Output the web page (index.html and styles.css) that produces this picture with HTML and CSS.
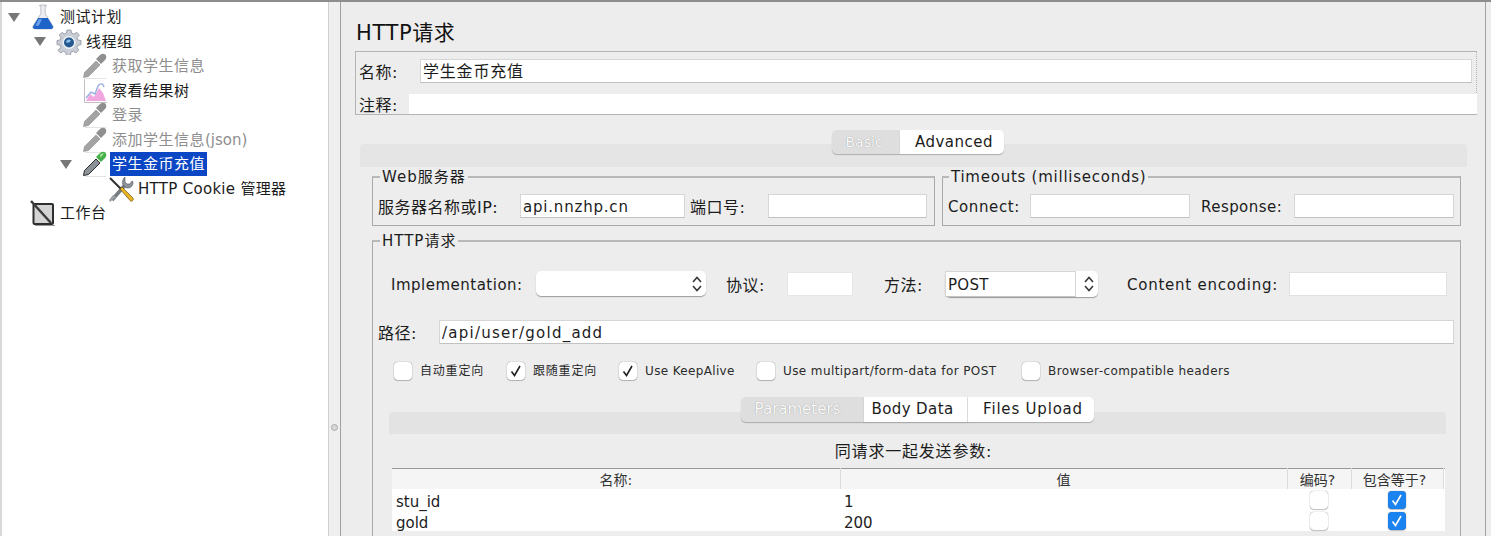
FILE: index.html
```html
<!DOCTYPE html>
<html lang="zh">
<head>
    <meta charset="utf-8">
    <title>HTTP请求</title>
    <link rel="stylesheet" href="styles.css">
</head>
<body>
    <svg class="defs" width="0" height="0">
        <symbol id="i-flask" viewBox="0 0 24 24">
            <path d="M9 1h6v1h-1v7l7 11c1 2 0 3-2 3H5c-2 0-3-1-2-3l7-11V2H9z" fill="#eceef2" stroke="#a9adb5" stroke-width=".7"/>
            <path d="M7.500 13h9l4.500 7.500c.6 1.500 0 2.500-2 2.500H5c-2 0-2.600-1-2-2.500z" fill="#1e63c8"/>
            <path d="M8 14h3l-3 6H5z" fill="#6ea2e8"/>
        </symbol>
        <symbol id="i-gear" viewBox="0 0 26 26">
            <path d="M11 1h4l.6 3 2.400 1 2.600-1.700 2.800 2.800L21 8.700l1 2.300 3 .6v4l-3 .6-1 2.400 1.700 2.600-2.800 2.800-2.600-1.700-2.400 1-.6 3h-4l-.6-3-2.400-1-2.600 1.700-2.800-2.800L5 18.600 4 16.200l-3-.6v-4l3-.6 1-2.300-1.700-2.600 2.800-2.800L8 5l2.400-1z" fill="#c9ced6" stroke="#8b919b" stroke-width=".8"/>
            <circle cx="13" cy="13.500" r="6.500" fill="#eef1f5"/>
            <circle cx="13" cy="13.500" r="5" fill="#24588f"/>
            <path d="M10 13.500a3 3 0 0 1 5-2.200l-1.500 2.200z" fill="#8fc0ee"/>
        </symbol>
        <symbol id="i-dropper-off" viewBox="0 0 26 26">
            <path d="M1.500 24.500l1-5L14 8l4 4L6.500 23.500z" fill="#a3a3a3" stroke="#8c8c8c" stroke-width=".6"/>
            <path d="M14 6l4-4c2-1.600 4-1.600 5.200-.4S25 5 23 7l-4 4z" fill="#8f8f8f"/>
            <path d="M3 25.500h21" stroke="#e4e4e4" stroke-width="1"/>
        </symbol>
        <symbol id="i-dropper-on" viewBox="0 0 26 26">
            <path d="M1.500 24.500l1-5L14 8l4 4L6.500 23.500z" fill="#8d9198" stroke="#2c2c2c" stroke-width="1"/>
            <path d="M14 6l4-4c2-1.600 4-1.600 5.200-.4S25 5 23 7l-4 4z" fill="#46b04a"/>
            <path d="M18 4c1.500-1.500 2.800-1.700 3.800-1.200L18.500 6.500z" fill="#a8e6a0"/>
            <path d="M3 25.500h21" stroke="#e4e4e4" stroke-width="1"/>
        </symbol>
        <symbol id="i-chart" viewBox="0 0 26 26">
            <path d="M2.500 1v23.500H25" fill="none" stroke="#c4bec3" stroke-width="1"/>
            <path d="M4 23l4-7 4 3 5-9 4 5 3 8z" fill="#f1a7e0"/>
            <path d="M4 20l5-6 4 2 3-8c2-3 5-3 6 1" fill="none" stroke="#97aee0" stroke-width="1.400"/>
        </symbol>
        <symbol id="i-tools" viewBox="0 0 26 26">
            <path d="M4 24L18 8" stroke="#777b82" stroke-width="3.500"/>
            <path d="M2 26l-1-2 4-5 3 2z" fill="#9ba0a8"/>
            <path d="M17 1v5l2 2h3l2-3 1 1c0 4-2 6-6 6l-2-1-2-2c-1-3 0-7 2-8z" fill="#8f949c" stroke="#4b4e54" stroke-width=".6"/>
            <path d="M2 2l11 11" stroke="#2f2f2f" stroke-width="2"/>
            <path d="M12 13l2-2 11 11c.6 1 .4 2-.5 2.700s-2 .6-2.500-.2z" fill="#e8b322" stroke="#6b5518" stroke-width=".7"/>
        </symbol>
        <symbol id="i-bench" viewBox="0 0 26 26">
            <rect x="3.500" y="4" width="19.500" height="20" rx="1" fill="#d4d4d4" stroke="#2e2e2e" stroke-width="2"/>
            <path d="M1 1l20 22" stroke="#3a3a3a" stroke-width="2.500"/>
            <path d="M5 25.500h20" stroke="#9a9a9a" stroke-width="1"/>
        </symbol>
        <symbol id="i-updown" viewBox="0 0 12 18">
            <path d="M2 7l4-4.500L10 7M2 11l4 4.500L10 11" fill="none" stroke="#333" stroke-width="1.500"/>
        </symbol>
        <symbol id="i-check" viewBox="0 0 18 18">
            <path d="M4.500 9.500l3 4L13 4" fill="none" stroke="currentColor" stroke-width="1.600"/>
        </symbol>
    </svg>

    <div class="tree">
        <div class="node level-0"><span class="arrow"></span><svg class="icon"><use href="#i-flask"/></svg><span class="text">测试计划</span></div>
        <div class="node level-1"><span class="arrow"></span><svg class="icon"><use href="#i-gear"/></svg><span class="text">线程组</span></div>
        <div class="node level-2"><span class="no-arrow"></span><svg class="icon"><use href="#i-dropper-off"/></svg><span class="text off">获取学生信息</span></div>
        <div class="node level-2"><span class="no-arrow"></span><svg class="icon"><use href="#i-chart"/></svg><span class="text">察看结果树</span></div>
        <div class="node level-2"><span class="no-arrow"></span><svg class="icon"><use href="#i-dropper-off"/></svg><span class="text off">登录</span></div>
        <div class="node level-2"><span class="no-arrow"></span><svg class="icon"><use href="#i-dropper-off"/></svg><span class="text off">添加学生信息<span class="tight">(json)</span></span></div>
        <div class="node level-2"><span class="arrow"></span><svg class="icon"><use href="#i-dropper-on"/></svg><span class="text selected">学生金币充值</span></div>
        <div class="node level-3"><span class="no-arrow"></span><svg class="icon"><use href="#i-tools"/></svg><span class="text tight">HTTP Cookie 管理器</span></div>
        <div class="node level-0"><span class="no-arrow"></span><svg class="icon"><use href="#i-bench"/></svg><span class="text">工作台</span></div>
    </div>

    <div class="splitter"><span class="grip"></span></div>

    <div class="main">
        <h1 class="title">HTTP请求</h1>

        <div class="name-box">
            <div class="name-row">
                <label class="cjk name-label">名称:</label>
                <div class="field name-input">学生金币充值</div>
            </div>
            <div class="comment-row">
                <label class="cjk comment-label">注释:</label>
                <div class="comment-input"></div>
            </div>
        </div>

        <div class="tabs outer-tabs">
            <span class="tab disabled basic-tab">Basic</span>
            <span class="tab advanced-tab">Advanced</span>
        </div>

        <div class="pane outer-pane">
            <div class="group-row">
                <div class="group web-group">
                    <span class="group-title">Web服务器</span>
                    <div class="group-fields">
                        <label class="cjk w-server">服务器名称或IP:</label>
                        <div class="field w-host">api.nnzhp.cn</div>
                        <label class="cjk w-port-label">端口号:</label>
                        <div class="field w-port"></div>
                    </div>
                </div>
                <div class="group time-group">
                    <span class="group-title time-title">Timeouts (milliseconds)</span>
                    <div class="group-fields">
                        <label class="latin w-connect">Connect:</label>
                        <div class="field w-connect-input"></div>
                        <label class="latin w-response">Response:</label>
                        <div class="field w-response-input"></div>
                    </div>
                </div>
            </div>

            <div class="group http-group">
                <span class="group-title">HTTP请求</span>

                <div class="impl-row">
                    <label class="latin w-impl">Implementation:</label>
                    <div class="select w-impl-select"><svg class="updown"><use href="#i-updown"/></svg></div>
                    <label class="cjk w-proto">协议:</label>
                    <div class="field w-proto-input"></div>
                    <label class="cjk w-method">方法:</label>
                    <div class="combo">
                        <div class="field combo-input">POST</div>
                        <div class="combo-btn"><svg class="updown"><use href="#i-updown"/></svg></div>
                    </div>
                    <label class="latin w-enc">Content encoding:</label>
                    <div class="field w-enc-input"></div>
                </div>

                <div class="path-row">
                    <label class="cjk w-path">路径:</label>
                    <div class="field path-input">/api/user/gold_add</div>
                </div>

                <div class="check-row">
                    <span class="check w-c1"><span class="box"></span>自动重定向</span>
                    <span class="check w-c2"><span class="box"><svg><use href="#i-check"/></svg></span>跟随重定向</span>
                    <span class="check w-c3"><span class="box"><svg><use href="#i-check"/></svg></span>Use KeepAlive</span>
                    <span class="check w-c4"><span class="box"></span>Use multipart/form-data for POST</span>
                    <span class="check"><span class="box"></span>Browser-compatible headers</span>
                </div>

                <div class="tabs inner-tabs">
                    <span class="tab disabled params-tab">Parameters</span>
                    <span class="tab body-tab">Body Data</span>
                    <span class="tab files-tab">Files Upload</span>
                </div>

                <div class="pane inner-pane">
                    <div class="caption">同请求一起发送参数:</div>
                    <table class="params">
                        <colgroup>
                            <col class="col-name"><col class="col-value"><col class="col-enc"><col class="col-eq"><col class="col-end">
                        </colgroup>
                        <thead>
                            <tr><th>名称:</th><th>值</th><th>编码?</th><th>包含等于?</th><th class="end"></th></tr>
                        </thead>
                        <tbody>
                            <tr>
                                <td>stu_id</td><td>1</td>
                                <td class="mid"><span class="box"></span></td>
                                <td class="mid"><span class="box on"><svg><use href="#i-check"/></svg></span></td>
                                <td class="mid"></td>
                            </tr>
                            <tr>
                                <td>gold</td><td>200</td>
                                <td class="mid"><span class="box"></span></td>
                                <td class="mid"><span class="box on"><svg><use href="#i-check"/></svg></span></td>
                                <td class="mid"></td>
                            </tr>
                        </tbody>
                    </table>
                </div>
            </div>
        </div>
    </div>
</body>
</html>
```
FILE: styles.css
```css
* {
    box-sizing: border-box;
}
html, body {
    height: 536px;
    overflow: hidden;
}
body {
    margin: 0;
    display: flex;
    border-top: 2px solid #8d8d8d;
    background-color: #ededed;
    font-family: "DejaVu Sans", "Noto Sans CJK SC", sans-serif;
    font-size: 15px;
    color: #1c1c1c;
}
.defs {
    position: absolute;
}
label {
    white-space: nowrap;
}
label.latin {
    padding-top: 2px;
}
label.cjk {
    font-size: 16px;
    letter-spacing: .5px;
}

/* left tree */
.tree {
    width: 328px;
    flex: none;
    background-color: #fff;
    border-left: 2px solid #d8d8d8;
    padding-top: 3px;
}
.node {
    display: flex;
    align-items: center;
    height: 24.5px;
}
.level-0 { padding-left: 6px; }
.level-1 { padding-left: 32px; }
.level-2 { padding-left: 58px; }
.level-3 { padding-left: 84px; }
.arrow {
    width: 0;
    height: 0;
    margin: 0 12px 0 0;
    border-style: solid;
    border-width: 9px 6px 0 6px;
    border-color: #777 transparent transparent transparent;
}
.no-arrow {
    width: 12px;
    margin-right: 12px;
}
.icon {
    width: 26px;
    height: 26px;
    margin: 0 4px 0 -2px;
    flex: none;
}
.text {
    font-size: 15px;
    letter-spacing: .5px;
    white-space: nowrap;
    padding: 0 2px;
    margin-left: -2px;
    line-height: 24px;
}
.text.tight {
    letter-spacing: .3px;
}
.tight {
    letter-spacing: 0;
}
.off {
    color: #8e8e8e;
}
.selected {
    background-color: #0b46c4;
    color: #fff;
}

.splitter {
    width: 12px;
    flex: none;
    background-color: #efefef;
    border-left: 1px solid #cfcfcf;
    display: flex;
    justify-content: center;
    padding-top: 422px;
}
.grip {
    width: 7px;
    height: 7px;
    border-radius: 50%;
    background-color: #d9d9d9;
    border: 1px solid #aaa;
}

/* right panel */
.main {
    flex: none;
    width: 1146px;
    background-color: #ededed;
    border-left: 1px solid #a0a0a0;
    border-right: 1px solid #a0a0a0;
}
.title {
    margin: 18px 0 0 15px;
    height: 25px;
    line-height: 26px;
    font-size: 21px;
    font-weight: normal;
    letter-spacing: .6px;
    color: #111;
}
.name-box {
    margin: 6px 8px 0 14px;
    height: 64px;
    border: 1px solid #b4b4b4;
    border-right-style: dotted;
    padding-top: 7px;
}
.name-row, .comment-row {
    display: flex;
    align-items: center;
}
.name-label {
    width: 64px;
    padding-left: 3px;
}
.comment-label {
    width: 53px;
    flex: none;
    padding-left: 3px;
}
.field {
    height: 24px;
    background-color: #fff;
    border: 1px solid #d6d6d6;
    border-bottom-color: #c2c2c2;
    line-height: 24px;
    padding-left: 2px;
    letter-spacing: .3px;
    white-space: nowrap;
}
.name-input {
    width: 1052px;
    padding-left: 2px;
    font-size: 16px;
    letter-spacing: .8px;
}
.comment-row {
    margin-top: 11px;
    height: 20px;
}
.comment-input {
    flex: 1;
    height: 20px;
    background-color: #fff;
    margin-right: -1px;
}

.tabs {
    display: flex;
    position: relative;
    z-index: 1;
    width: max-content;
}
.outer-tabs {
    margin: 15px 0 -10px 491px;
    height: 24px;
}
.tab {
    background-color: #fff;
    text-align: center;
    letter-spacing: .4px;
    box-shadow: 0 1px 1px rgba(0, 0, 0, .25);
    line-height: 24px;
}
.tab.disabled {
    background-color: #dedede;
    color: #fafafa;
    text-shadow: 0 0 1px #888;
    letter-spacing: 0;
    border-radius: 5px 0 0 5px;
}
.tabs .tab:last-child {
    border-radius: 0 5px 5px 0;
}
.basic-tab { width: 68px; font-size: 14px; padding-right: 4px; }
.advanced-tab { width: 104px; padding-left: 4px; letter-spacing: .5px; }
.pane {
    border-radius: 4px;
    background-image: linear-gradient(#e5e5e5 23px, #ededed 23px);
}
.outer-pane {
    margin: 0 18px 0 19px;
    padding: 32px 6px 0 12px;
    height: 392px;
}
.group-row {
    display: flex;
    gap: 7px;
}
.group {
    position: relative;
    border: 1px solid #a9a9a9;
    border-top-width: 2px;
    border-top-color: #b9b9b9;
}
.group-title {
    position: absolute;
    top: -11px;
    left: 7px;
    padding: 0 2px;
    background-color: #ededed;
    line-height: 20px;
    letter-spacing: 1px;
    white-space: nowrap;
}
.group-title.time-title {
    left: 6px;
    letter-spacing: .75px;
}
.web-group {
    width: 563px;
    height: 50px;
}
.time-group {
    width: 519px;
    height: 50px;
}
.group-fields {
    display: flex;
    align-items: center;
    padding: 16px 0 0 5px;
}
.w-server { width: 142px; }
.w-host { width: 165px; letter-spacing: .8px; }
.w-port-label { width: 83px; padding-left: 5px; }
.w-port { width: 159px; }
.w-connect { width: 82px; letter-spacing: .6px; }
.w-connect-input { width: 160px; }
.w-response { width: 104px; padding-left: 11px; letter-spacing: .45px; }
.w-response-input { width: 160px; }

.http-group {
    margin-top: 14px;
    height: 296px;
    width: 1089px;
    border-bottom: none;
}
.impl-row {
    display: flex;
    align-items: center;
    height: 26px;
    margin-top: 29px;
    padding-left: 18px;
}
.w-impl { width: 145px; letter-spacing: .5px; }
.select {
    width: 170px;
    height: 25px;
    align-self: flex-start;
    background-color: #fff;
    border-radius: 5px;
    box-shadow: 0 1px 1px rgba(0, 0, 0, .35);
    display: flex;
    justify-content: flex-end;
    align-items: center;
}
.updown {
    width: 12px;
    height: 18px;
    margin-right: 3px;
}
.w-proto { width: 61px; padding-left: 20px; box-sizing: content-box; }
.w-proto-input { width: 66px; border-color: #e6e6e6; }
.w-method { width: 61px; margin-left: 31px; }
.combo {
    display: flex;
    width: 153px;
    height: 26px;
    border-radius: 5px;
    background-color: #fff;
    box-shadow: 0 1px 1px rgba(0, 0, 0, .35);
}
.combo-input {
    width: 131px;
    height: 26px;
    padding-top: 1px;
}
.combo-btn {
    flex: 1;
    display: flex;
    align-items: center;
    justify-content: flex-end;
}
.w-enc { width: 162px; margin-left: 29px; letter-spacing: .75px; }
.w-enc-input { width: 158px; border-color: #e0e0e0; }

.path-row {
    display: flex;
    align-items: center;
    margin-top: 23px;
    padding-left: 5px;
}
.w-path { width: 61px; }
.path-input {
    width: 1015px;
    letter-spacing: 1.250px;
}
.check-row {
    display: flex;
    align-items: center;
    margin-top: 18px;
    padding-left: 21px;
    height: 18px;
    font-size: 12px;
    color: #2a2a2a;
}
.check {
    display: flex;
    align-items: center;
    white-space: nowrap;
    letter-spacing: .4px;
    line-height: 20px;
}
.box {
    display: inline-block;
    width: 18px;
    height: 18px;
    background-color: #fff;
    border-radius: 4px;
    box-shadow: 0 0 1px rgba(0, 0, 0, .6), 0 1px 1px rgba(0, 0, 0, .2);
    color: #222;
}
.box svg {
    display: block;
    width: 18px;
    height: 18px;
}
.box.on {
    background-color: #1a83f0;
    color: #fff;
}
.check .box {
    margin-right: 8px;
}
.w-c1 { width: 113px; letter-spacing: .8px; }
.w-c2 { width: 112px; letter-spacing: .8px; }
.w-c3 { width: 138px; letter-spacing: .35px; }
.w-c4 { width: 265px; }

.inner-tabs {
    margin: 17px 0 -10px 368px;
    height: 25px;
}
.params-tab { width: 123px; padding-right: 10px; }
.body-tab { width: 104px; border-right: 1px solid #e0e0e0; padding-right: 6px; }
.files-tab { width: 126px; padding-left: 4px; letter-spacing: .8px; }
.inner-tabs .tab {
    line-height: 25px;
}
.inner-pane {
    margin: 0 14px 0 16px;
    padding: 22px 2px 0 3px;
    height: 124px;
    background-image: linear-gradient(#e3e3e3 22px, #ededed 22px);
}
.caption {
    height: 34px;
    line-height: 36px;
    font-size: 16px;
    text-align: center;
    padding-right: 9px;
    letter-spacing: .8px;
}
.params {
    width: 1053px;
    table-layout: fixed;
    border-collapse: collapse;
    background-color: #fff;
    border-top: 1px solid #989898;
}
.col-name { width: 448px; }
.col-value { width: 447px; }
.col-enc { width: 64px; }
.col-eq { width: 92px; }
.col-end { width: 2px; }
.params th {
    height: 20px;
    padding: 0;
    background-color: #f5f5f5;
    font-size: 14px;
    font-weight: normal;
    color: #333;
    border-right: 1px solid #dcdcdc;
}
.params th:nth-child(3) {
    padding-right: 3px;
}
.params th:nth-child(4) {
    padding-right: 5px;
}
.params th.end {
    background-color: #fff;
    border-right: none;
}
.params td {
    height: 21px;
    padding: 6px 0 0 4px;
    line-height: 15px;
}
.params td.mid {
    padding: 0;
    text-align: center;
}
.params .box {
    vertical-align: middle;
}
```
